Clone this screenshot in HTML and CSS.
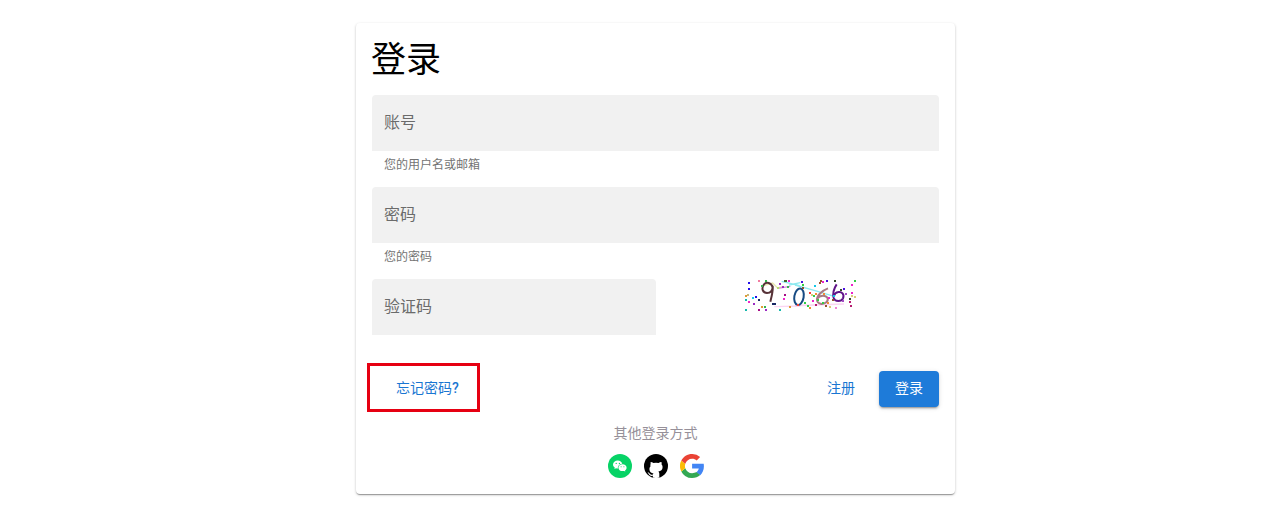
FILE: index.html
```html
<!DOCTYPE html>
<html lang="zh-CN">
<head>
<meta charset="utf-8">
<title>登录</title>
<link rel="stylesheet" href="styles.css">
</head>
<body>
<main class="card">
  <h1 class="title">登录</h1>
  <div class="field">账号</div>
  <p class="helper">您的用户名或邮箱</p>
  <div class="field">密码</div>
  <p class="helper">您的密码</p>
  <div class="captcha-row">
    <div class="field">验证码</div>
    <svg class="captcha" width="120" height="36" viewBox="0 0 120 36" fill="none">
      <g transform="translate(-5 -9) scale(.33333)">
        <path d="M88 46L113 39L128 54L145 49" stroke="#e8e6b0" stroke-width="4"/>
        <path d="M128 55L166 49" stroke="#d58bd9" stroke-width="4"/>
        <path d="M140 34L194 47M162 45L196 38" stroke="#8eeaf0" stroke-width="4"/>
        <path d="M118 110L196 108" stroke="#fbd5f2" stroke-width="4"/>
        <path d="M113 52C109 38 94 34 87 43C78 55 83 69 96 69C107 69 113 61 113 48C115 61 110 78 106 95" stroke="#573238" stroke-width="6"/>
        <g stroke-width="6">
          <path d="M39 39h6M39 57h6M60 81h6" stroke="#2411e8"/>
          <path d="M30 78h6M78 111h6M162 111h6" stroke="#e19a35"/>
          <path d="M36 75h6" stroke="#c8b878"/>
          <path d="M30 90h6M30 120h6M132 120h6" stroke="#16b8ac"/>
          <path d="M51 84h6" stroke="#16c9ed"/>
          <path d="M69 33h6" stroke="#f17ba0"/>
          <path d="M39 96h6M144 87h6M159 33h6" stroke="#ed28ca"/>
          <path d="M54 102h6M90 120h6M132 42h6M141 51h6" stroke="#9b2bc2"/>
          <path d="M69 90h6M111 102h12" stroke="#192865"/>
          <path d="M69 120h6M147 75h6" stroke="#a60e86"/>
          <path d="M78 48h6M90 33h6M87 111h6M156 51h6" stroke="#35b451"/>
          <path d="M126 54h6" stroke="#b8dc72"/>
          <path d="M147 33h9" stroke="#416528"/>
        </g>
      </g>
      <g transform="translate(55 -9) scale(.33333)">
        <path d="M0 45L60 62L120 80" stroke="#8eeaf0" stroke-width="4"/>
        <path d="M0 107L147 102" stroke="#fbd5f2" stroke-width="5"/>
        <ellipse cx="12" cy="80" rx="14" ry="25" transform="rotate(10 12 80)" stroke="#174b83" stroke-width="6"/>
        <path d="M99 55C80 62 65 78 66 90C67 103 84 105 94 97C103 88 97 77 84 77C76 77 69 82 66 87" stroke="#a77b84" stroke-width="6"/>
        <path d="M125 43C117 55 113 72 116 84C120 96 139 96 144 85C149 72 140 64 130 66C123 67 118 73 116 79" stroke="#601588" stroke-width="6"/>
        <g stroke-width="6">
          <path d="M18 36h6M93 33h6M144 57h6" stroke="#4a11dc"/>
          <path d="M21 45h6M177 33h6M54 78h6M36 108h6M27 99h6M66 90h6M81 99h6" stroke="#33cd45"/>
          <path d="M21 54h6M72 39h6M75 33h6M111 90h6M90 108h6" stroke="#95542d"/>
          <path d="M57 48h6M114 78h6" stroke="#14c7e7"/>
          <path d="M81 36h6M168 45h6M168 69h6M51 93h6M99 84h6" stroke="#ed20c9"/>
          <path d="M117 33h6M162 87h6M135 60h6" stroke="#34452b"/>
          <path d="M162 96h6M165 108h6M60 105h6" stroke="#b71d70"/>
          <path d="M168 78h6M177 81h6M48 75h6M102 111h6" stroke="#d8ca79"/>
          <path d="M42 69h6M6 105h6" stroke="#f34335"/>
          <path d="M60 72h6M84 72h6M42 114h6M96 99h6" stroke="#f18d31"/>
          <path d="M120 114h6" stroke="#f184d4"/>
          <path d="M141 93h6M150 72h6" stroke="#a34bc4"/>
        </g>
      </g>
    </svg>
  </div>
  <div class="actions">
    <a class="button forgot">忘记密码<span class="mark">?</span></a>
    <a class="button register">注册</a>
    <a class="button primary">登录</a>
  </div>
  <p class="others">其他登录方式</p>
  <div class="providers">
    <svg width="24" height="24" viewBox="0 0 24 24">
      <circle cx="12" cy="12" r="12" fill="#07d366"/>
      <path fill="#fff" d="M9.8 6.5C7.1 6.5 5 8.3 5 10.5c0 1.3.7 2.4 1.8 3.1l-.4 1.5 1.7-.9c.6.2 1.2.3 1.8.3a4 4 0 0 1-.1-.9c0-2.1 2-3.8 4.5-3.9-.5-1.8-2.3-3.2-4.5-3.2z"/>
      <path fill="#fff" d="M14.5 10.3c-2.3 0-4.1 1.5-4.1 3.4s1.8 3.4 4.1 3.4c.5 0 1-.1 1.5-.2l1.3.7-.3-1.2c1-.6 1.6-1.6 1.6-2.7 0-1.9-1.8-3.4-4.1-3.4z"/>
      <g fill="#07d366"><circle cx="8.2" cy="9.4" r=".65"/><circle cx="11.4" cy="9.4" r=".65"/><circle cx="13.1" cy="12.7" r=".55"/><circle cx="15.9" cy="12.7" r=".55"/></g>
    </svg>
    <svg width="24" height="24" viewBox="0 0 24 24">
      <circle cx="12" cy="12" r="12"/>
      <path fill="#fff" d="M6.6 8c1 0 2 .5 2.8 1a13 13 0 0 1 5.2 0c.8-.5 1.8-1 2.8-1 .4 1 .3 1.7.1 2.3.7.8 1.1 1.6 1.1 2.6 0 3.1-1.8 4.2-4.2 4.5.5.5.9 1.2.9 2.2v4a12 12 0 0 1-6.4 0v-1.8c-2.5.4-3.5-.6-4.1-1.8-.3-.7-.8-1.1-1.3-1.5 1-.3 1.7.3 2.3 1.2.8 1.1 1.8 1.3 3.1.8.1-.5.3-.8.6-1.1-2.3-.3-4.1-1.4-4.1-4.5 0-1 .4-1.8 1.1-2.6-.2-.6-.3-1.4.1-2.3z"/>
    </svg>
    <svg width="24" height="24" viewBox="0 0 24 24">
      <path fill="#4285f4" d="M23.7 9.7H12.1v4.8h6.7c-.3 1.5-1.1 2.8-2.5 3.7l3.9 3c2.3-2.1 3.7-5.3 3.7-9 0-.9-.1-1.7-.2-2.5z"/>
      <path fill="#34a853" d="M12.1 24c3.2 0 6-1 8.1-2.9l-3.9-3c-1.1.7-2.5 1.2-4.2 1.2-3.2 0-5.8-2.1-6.8-5l-4 3.1A12 12 0 0 0 12.1 24z"/>
      <path fill="#fbbc05" d="M5.3 14.3a7.3 7.3 0 0 1 0-4.6l-4-3.1a12 12 0 0 0 0 10.8z"/>
      <path fill="#ea4335" d="M12.1 4.8c1.8 0 3.4.6 4.6 1.8l3.4-3.5A11.5 11.5 0 0 0 12.1 0C7.4 0 3.3 2.7 1.3 6.6l4 3.1c1-2.8 3.6-4.9 6.8-4.9z"/>
    </svg>
  </div>
</main>
</body>
</html>
```
FILE: styles.css
```css
* { box-sizing: border-box; }
body {
  min-height: 100vh;
  margin: 0;
  padding: 23px 0 0 356px;
  background: #fff;
  font-family: "Liberation Sans", "Noto Sans CJK SC", sans-serif;
}
.card {
  width: 599px;
  height: 471px;
  padding: 16px;
  border-radius: 4px;
  background: #fff;
  box-shadow: 0 2px 1px -1px rgba(0,0,0,.2), 0 1px 1px rgba(0,0,0,.14), 0 1px 3px rgba(0,0,0,.2);
}
.title {
  margin: 0 0 14px -1px;
  height: 42px;
  line-height: 42px;
  font-size: 35px;
  font-weight: 400;
}
.field {
  height: 56px;
  padding-left: 12px;
  border-radius: 4px 4px 0 0;
  background: #f1f1f1;
  color: #6b6b6b;
  font-size: 16px;
  line-height: 56px;
}
.helper {
  height: 36px;
  margin: 0;
  padding: 4px 12px 0;
  color: #737373;
  font-size: 12px;
  line-height: 20px;
}
.captcha-row { display: flex; }
.captcha-row .field { width: 284px; }
.captcha { margin-left: 84px; }
.actions { display: flex; align-items: center; height: 48px; margin-top: 28px; }
.button {
  height: 36px;
  color: #1976d2;
  font-size: 14px;
  line-height: 36px;
  text-align: center;
}
.forgot {
  width: 113px;
  height: 49px;
  margin-left: -5px;
  padding-left: 8px;
  border: 3px solid #e60012;
  line-height: 45px;
}
.mark { font-family: Roboto, sans-serif; font-weight: 500; }
.register { width: 60px; margin: 4px 8px 0 auto; line-height: 34px; }
.primary {
  width: 60px;
  margin-top: 4px;
  border-radius: 4px;
  background: #1e7bd9;
  color: #fff;
  line-height: 34px;
  box-shadow: 0 3px 1px -2px rgba(0,0,0,.2), 0 2px 2px rgba(0,0,0,.14), 0 1px 5px rgba(0,0,0,.12);
}
.others {
  height: 20px;
  margin: 12px 0 11px;
  color: #969099;
  font-size: 14px;
  line-height: 20px;
  text-align: center;
}
.providers { display: flex; justify-content: center; gap: 12px; }
```
